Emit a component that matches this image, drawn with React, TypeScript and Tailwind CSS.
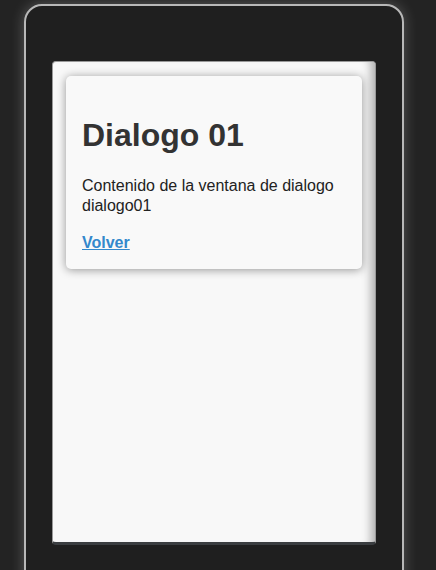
export default function App() {
  return (
    <div className="h-[570px] overflow-hidden bg-[#232323] pl-[24px] pt-[4px] font-['Liberation_Sans',Arial,sans-serif]">
      {/* phone frame */}
      <div className="h-[620px] w-[380px] rounded-t-[18px] border-2 border-[#b8b8b8] bg-[#1f1f1f] px-[26px] pt-[55px] shadow-[0_0_14px_rgba(255,255,255,0.25)]">
        {/* screen */}
        <div className="h-[484px] w-[324px] rounded-[4px] border border-b-[3px] border-[#999] border-b-[#3a3d40] bg-[#f8f8f8] px-[13px] pt-[14px] shadow-[inset_-12px_0_10px_-8px_rgba(0,0,0,0.3)]">
          {/* dialog */}
          <div className="w-[296px] rounded-[5px] bg-[#f9f9f9] px-[16px] pb-[16px] pt-[39px] shadow-[0_1px_10px_rgba(0,0,0,0.4)]">
            <h1 className="text-[32px] font-bold leading-[40px] text-[#333]">Dialogo 01</h1>
            <p className="mt-[21px] text-[16px] leading-[20px] text-[#222]">
              Contenido de la ventana de dialogo dialogo01
            </p>
            <a href="#" className="mt-[17px] block text-[16px] font-bold leading-[20px] text-[#3388cc] underline">
              Volver
            </a>
          </div>
        </div>
      </div>
    </div>
  );
}
